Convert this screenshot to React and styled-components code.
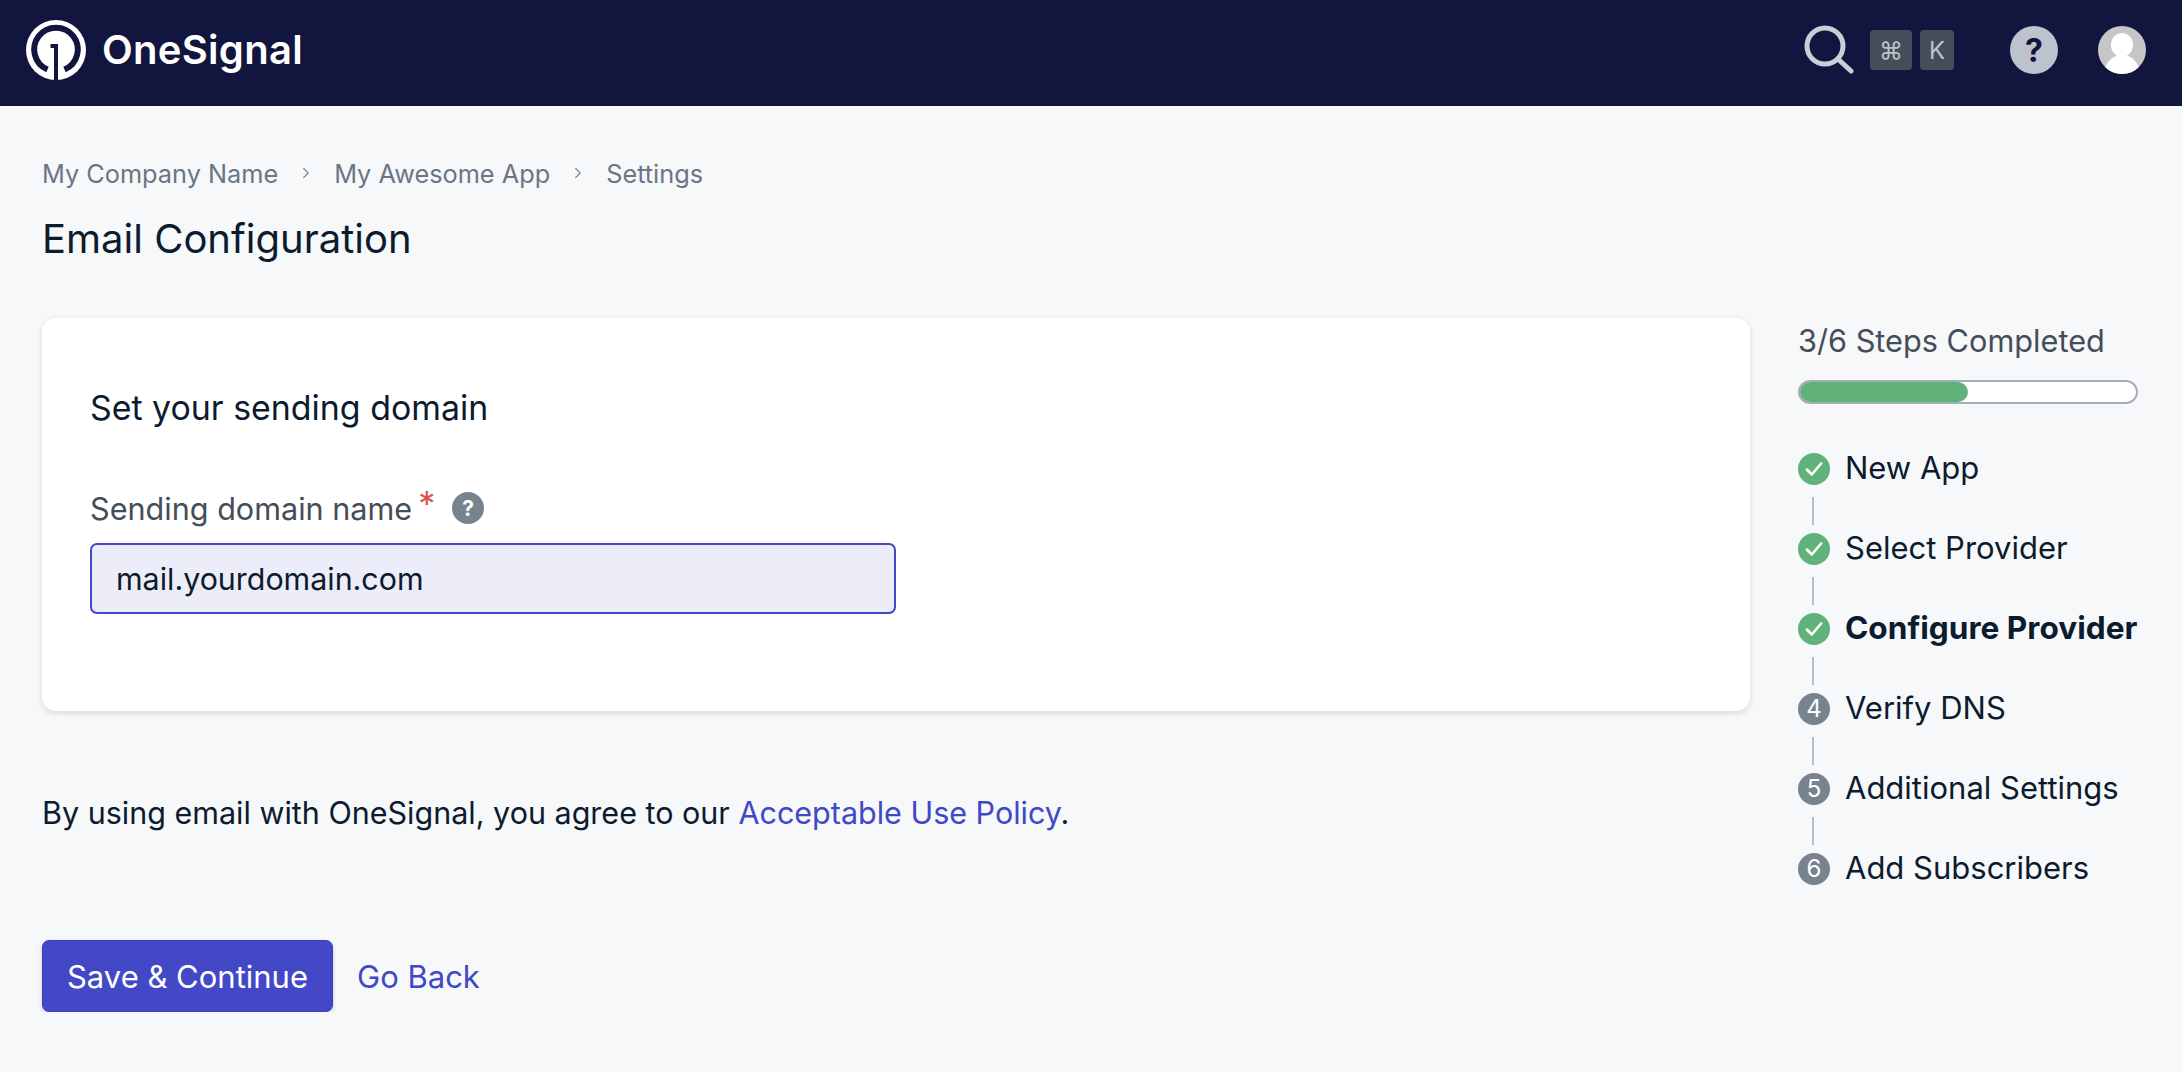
import React from 'react';
import styled, { createGlobalStyle } from 'styled-components';
import { ChevronRight } from 'lucide-react';

const GlobalStyle = createGlobalStyle`
  html, body {
    margin: 0;
    padding: 0;
    background: #f6f8fa;
    font-family: Inter, "Liberation Sans", sans-serif;
    color: #0c1b2e;
  }
  * { box-sizing: border-box; }
`;

const Header = styled.header`
  height: 106px;
  background: #12153d;
  display: flex;
  align-items: center;
  justify-content: space-between;
  padding: 0 36px 0 25px;
`;

const Brand = styled.div`
  display: flex;
  align-items: center;
  gap: 15px;
  margin-bottom: 6px;
`;

const Wordmark = styled.span`
  color: #fff;
  font-size: 40px;
  font-weight: 600;
  line-height: 1;
  letter-spacing: 0.3px;
`;

const HeaderTools = styled.div`
  display: flex;
  align-items: center;
  margin-bottom: 6px;
`;

const SearchGroup = styled.div`
  display: flex;
  align-items: center;
  gap: 8px;
  margin-right: 56px;
`;

const KeyCap = styled.span`
  height: 40px;
  width: ${p => p.$wide ? '42px' : '34px'};
  margin-left: ${p => p.$wide ? '8px' : '0'};
  background: #454d59;
  color: #bcc3cf;
  border-radius: 4px;
  display: flex;
  align-items: center;
  justify-content: center;
  font-size: 24px;
`;

const HelpDot = styled.div`
  width: 48px;
  height: 48px;
  border-radius: 50%;
  background: #bcc3cf;
  color: #12153d;
  font-size: 32px;
  font-weight: 700;
  display: flex;
  align-items: center;
  justify-content: center;
  margin-right: 40px;
`;

const Avatar = styled.div`
  width: 48px;
  height: 48px;
  border-radius: 50%;
  overflow: hidden;
`;

const Page = styled.main`
  padding: 54px 44px 0 42px;
`;

const Crumbs = styled.nav`
  display: flex;
  align-items: center;
  height: 26px;
  font-size: 25.3px;
  color: #6b7684;
`;

const CrumbSep = styled.span`
  width: 56px;
  display: flex;
  justify-content: center;
  color: #7d8794;
`;

const Title = styled.h1`
  margin: 28px 0 0;
  font-size: 40px;
  line-height: 50px;
  font-weight: 400;
  color: #0c1b2e;
`;

const Columns = styled.div`
  display: flex;
  margin-top: 54px;
  gap: 48px;
`;

const Content = styled.div`
  width: 1708px;
  flex: none;
`;

const Card = styled.section`
  height: 393px;
  background: #fff;
  border-radius: 14px;
  box-shadow: 0 2px 6px rgba(20, 30, 50, 0.14);
  padding: 70px 48px 0;
`;

const CardTitle = styled.h2`
  margin: 0;
  font-size: 33.9px;
  line-height: 40px;
  font-weight: 400;
  color: #0c1b2e;
`;

const FieldLabel = styled.div`
  display: flex;
  align-items: center;
  margin-top: 60px;
  height: 40px;
  font-size: 30.6px;
  color: #454d59;
`;

const Required = styled.span`
  color: #d9534f;
  font-size: 34px;
  line-height: 1;
  margin: -8px 0 0 6px;
`;

const Hint = styled.span`
  width: 32px;
  height: 32px;
  margin-left: 17px;
  border-radius: 50%;
  background: #78838f;
  color: #fff;
  font-size: 21px;
  font-weight: 700;
  display: flex;
  align-items: center;
  justify-content: center;
`;

const DomainInput = styled.input`
  display: block;
  margin-top: 15px;
  width: 806px;
  height: 71px;
  padding: 0 24px;
  background: #edecf9;
  border: 2px solid #4349c6;
  border-radius: 7px;
  font: inherit;
  font-size: 30.4px;
  color: #0c1b2e;
  outline: none;
`;

const Policy = styled.p`
  margin: 83px 0 0;
  font-size: 30.5px;
  line-height: 38px;
  color: #0c1b2e;
`;

const TextLink = styled.a`
  color: #4048c7;
  text-decoration: none;
`;

const Actions = styled.div`
  display: flex;
  align-items: center;
  gap: 24px;
  margin-top: 108px;
`;

const SaveButton = styled.button`
  width: 291px;
  height: 72px;
  background: #4348c6;
  border: 1px solid #3b40b0;
  border-radius: 7px;
  box-shadow: 0 2px 4px rgba(20, 30, 50, 0.18);
  color: #fff;
  font: inherit;
  font-size: 31px;
`;

const BackLink = styled(TextLink)`
  font-size: 31px;
`;

const Sidebar = styled.aside`
  flex: 1;
  min-width: 0;
`;

const ProgressLabel = styled.div`
  font-size: 30.7px;
  line-height: 46px;
  color: #454d59;
`;

const ProgressTrack = styled.div`
  margin-top: 16px;
  height: 24px;
  background: #fff;
  border: 2px solid #a7aebb;
  border-radius: 12px;
`;

const ProgressFill = styled.div`
  height: 100%;
  background: #61b27a;
  border-radius: 10px;
`;

const StepList = styled.ol`
  list-style: none;
  margin: 49px 0 0;
  padding: 0;
`;

const Step = styled.li`
  display: flex;
  align-items: center;
  gap: 15px;
  height: 32px;
  font-size: ${p => p.$current ? '31.6px' : '31px'};
  font-weight: ${p => p.$current ? 700 : 400};
  line-height: 30px;
  white-space: nowrap;
  color: #0c1b2e;
`;

const Connector = styled.li`
  width: 2px;
  height: 28px;
  margin: 12px 0 8px 14px;
  background: #b9bfc9;
`;

const StepDot = styled.span`
  width: 32px;
  height: 32px;
  flex: none;
  border-radius: 50%;
  background: ${p => p.$done ? '#61b27a' : '#78838f'};
  color: #fff;
  font-size: 24px;
  font-weight: 400;
  display: flex;
  align-items: center;
  justify-content: center;
`;

const StepName = styled.span`
  margin-top: -2px;
`;

const steps = [
  { name: 'New App', done: true },
  { name: 'Select Provider', done: true },
  { name: 'Configure Provider', done: true, current: true },
  { name: 'Verify DNS' },
  { name: 'Additional Settings' },
  { name: 'Add Subscribers' },
];

function Logo() {
  return (
    <svg width="62" height="62" viewBox="0 0 62 62">
      <circle cx="31" cy="31" r="30" fill="#fff" />
      <path d="M22.5 50.5 A21.8 21.8 0 1 1 39.5 50.5" fill="none" stroke="#12153d" strokeWidth="6" />
      <path d="M25.5 25 H33 V61 H29 V29 H25.5 Z" fill="#12153d" />
    </svg>
  );
}

function SearchIcon() {
  return (
    <svg width="50" height="50" viewBox="0 0 50 50" fill="none" stroke="#c9ced8" strokeWidth="5" strokeLinecap="round">
      <circle cx="21" cy="21" r="18" />
      <path d="M34 34 L47 46" />
    </svg>
  );
}

function AvatarIcon() {
  return (
    <svg width="48" height="48" viewBox="0 0 48 48">
      <rect width="48" height="48" fill="#c6c6c6" />
      <ellipse cx="24" cy="19" rx="11" ry="12" fill="#fff" />
      <path d="M7 42 C10 33 17 29 24 29 C31 29 38 33 41 42 L41 48 L7 48 Z" fill="#fff" />
    </svg>
  );
}

function CheckIcon() {
  return (
    <svg width="22" height="22" viewBox="0 0 20 20" fill="none" stroke="#fff" strokeWidth="2.4" strokeLinecap="round" strokeLinejoin="round">
      <path d="M3.5 10.5 L8 15 L16.5 5" />
    </svg>
  );
}

export default function App() {
  return (
    <>
      <GlobalStyle />
      <Header>
        <Brand>
          <Logo />
          <Wordmark>OneSignal</Wordmark>
        </Brand>
        <HeaderTools>
          <SearchGroup>
            <SearchIcon />
            <KeyCap $wide>⌘</KeyCap>
            <KeyCap>K</KeyCap>
          </SearchGroup>
          <HelpDot>?</HelpDot>
          <Avatar><AvatarIcon /></Avatar>
        </HeaderTools>
      </Header>
      <Page>
        <Crumbs>
          <span>My Company Name</span>
          <CrumbSep><ChevronRight size={18} strokeWidth={1.6} /></CrumbSep>
          <span>My Awesome App</span>
          <CrumbSep><ChevronRight size={18} strokeWidth={1.6} /></CrumbSep>
          <span>Settings</span>
        </Crumbs>
        <Title>Email Configuration</Title>
        <Columns>
          <Content>
            <Card>
              <CardTitle>Set your sending domain</CardTitle>
              <FieldLabel>
                Sending domain name
                <Required>*</Required>
                <Hint>?</Hint>
              </FieldLabel>
              <DomainInput defaultValue="mail.yourdomain.com" />
            </Card>
            <Policy>
              By using email with OneSignal, you agree to our <TextLink href="#">Acceptable Use Policy</TextLink>.
            </Policy>
            <Actions>
              <SaveButton>Save &amp; Continue</SaveButton>
              <BackLink href="#">Go Back</BackLink>
            </Actions>
          </Content>
          <Sidebar>
            <ProgressLabel>3/6 Steps Completed</ProgressLabel>
            <ProgressTrack>
              <ProgressFill style={{ width: '50%' }} />
            </ProgressTrack>
            <StepList>
              {steps.map((step, i) => (
                <React.Fragment key={step.name}>
                  {i > 0 && <Connector />}
                  <Step $current={step.current}>
                    <StepDot $done={step.done}>{step.done ? <CheckIcon /> : i + 1}</StepDot>
                    <StepName>{step.name}</StepName>
                  </Step>
                </React.Fragment>
              ))}
            </StepList>
          </Sidebar>
        </Columns>
      </Page>
    </>
  );
}
